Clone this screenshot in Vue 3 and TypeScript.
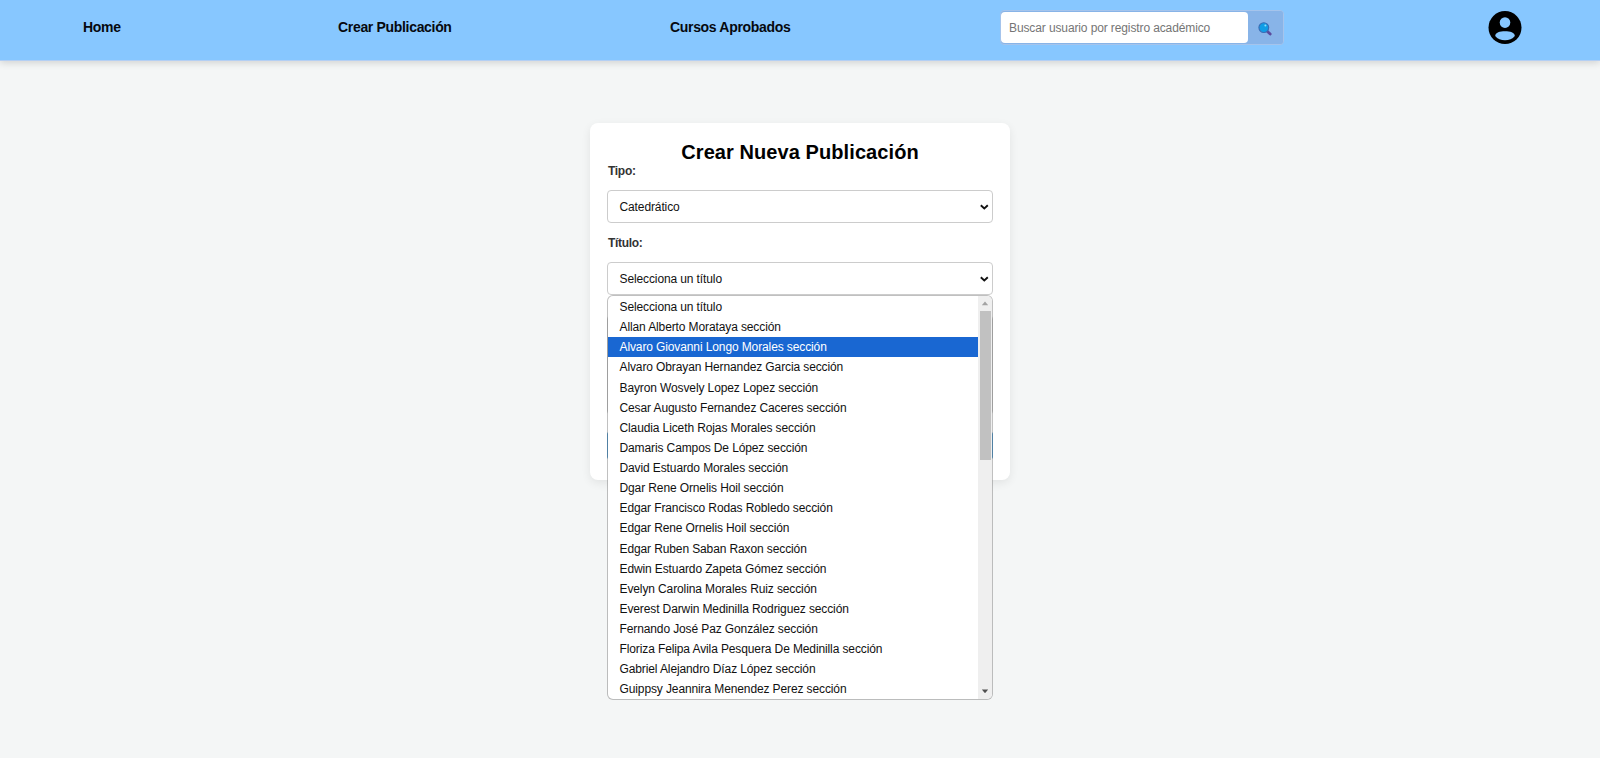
<script setup lang="ts">
import { ref } from 'vue'

const teachers: string[] = [
  'Allan Alberto Morataya',
  'Alvaro Giovanni Longo Morales',
  'Alvaro Obrayan Hernandez Garcia',
  'Bayron Wosvely Lopez Lopez',
  'Cesar Augusto Fernandez Caceres',
  'Claudia Liceth Rojas Morales',
  'Damaris Campos De López',
  'David Estuardo Morales',
  'Dgar Rene Ornelis Hoil',
  'Edgar Francisco Rodas Robledo',
  'Edgar Rene Ornelis Hoil',
  'Edgar Ruben Saban Raxon',
  'Edwin Estuardo Zapeta Gómez',
  'Evelyn Carolina Morales Ruiz',
  'Everest Darwin Medinilla Rodriguez',
  'Fernando José Paz González',
  'Floriza Felipa Avila Pesquera De Medinilla',
  'Gabriel Alejandro Díaz López',
  'Guippsy Jeannira Menendez Perez',
]
const options: string[] = ['Selecciona un título', ...teachers.map((t) => `${t} sección`)]
const active = ref(2)
const query = ref('')
</script>

<template>
  <div class="page">
    <header class="navbar">
      <a class="link home">Home</a>
      <a class="link create">Crear Publicación</a>
      <a class="link courses">Cursos Aprobados</a>
      <div class="search">
        <input v-model="query" class="search-input" type="text" placeholder="Buscar usuario por registro académico" />
        <button class="search-btn" type="button" aria-label="Buscar">
          <svg width="14" height="14" viewBox="0 0 14 14">
            <path d="M9.2 9.2 12.2 12" stroke="#5b4a9c" stroke-width="2.8" stroke-linecap="round" />
            <circle cx="5.8" cy="5.6" r="4.9" fill="#109de6" stroke="#3b6cb4" stroke-width="1.1" />
            <circle cx="7.4" cy="3.4" r="1" fill="#8be0fb" />
          </svg>
        </button>
      </div>
      <svg class="avatar" width="34" height="34" viewBox="0 0 34 34">
        <circle cx="17" cy="16.6" r="16.5" fill="#000" />
        <circle cx="17" cy="11.6" r="5.3" fill="#87c7ff" />
        <path d="M7.2 25C7.2 21.5 12 20.3 17 20.3S26.800 21.500 26.800 25C24.500 27.900 21 29.200 17 29.200S9.500 27.900 7.200 25Z" fill="#87c7ff" />
      </svg>
    </header>

    <main class="content">
      <form class="card" @submit.prevent>
        <h2 class="title">Crear Nueva Publicación</h2>
        <label class="label">Tipo:</label>
        <div class="select">
          <span>Catedrático</span>
          <svg class="chevron" width="10" height="7" viewBox="0 0 10 7"><path d="M1.8 1.3 5.3 4.5 8.8 1.3" /></svg>
        </div>
        <label class="label second">Título:</label>
        <div class="select">
          <span>Selecciona un título</span>
          <svg class="chevron" width="10" height="7" viewBox="0 0 10 7"><path d="M1.8 1.3 5.3 4.5 8.8 1.3" /></svg>
          <div class="dropdown">
            <ul class="list">
              <li v-for="(o, i) in options" :key="o" class="option" :class="{ active: i === active }" @mouseenter="active = i">{{ o }}</li>
            </ul>
            <div class="scrollbar">
              <svg class="arrow" width="8" height="5" viewBox="0 0 8 5"><path d="M4 0.5 7.2 4.2H0.8Z" fill="#a3a3a3" /></svg>
              <div class="thumb"></div>
              <svg class="arrow" width="8" height="5" viewBox="0 0 8 5"><path d="M4 4.2 0.8 0.5H7.2Z" fill="#505050" /></svg>
            </div>
          </div>
        </div>
        <div class="message"></div>
        <div class="submit"></div>
      </form>
    </main>
  </div>
</template>

<style>
body {
  background: #f4f6f6;
}
</style>

<style scoped>
.page {
  height: 758px;
  overflow: hidden;
  background: #f4f6f6;
  font-family: 'Liberation Sans', Arial, sans-serif;
  font-size: 12px;
  letter-spacing: -0.115px;
  color: #111;
}
.navbar {
  box-sizing: border-box;
  display: flex;
  align-items: center;
  height: 61px;
  padding: 0 78px 5px 83px;
  background: #87c7ff;
  border-bottom: 1px solid #b4cff3;
  box-shadow: 0 2px 7px rgba(0, 0, 0, 0.14);
}
.link {
  padding-bottom: 1px;
  font-size: 14px;
  font-weight: bold;
  letter-spacing: -0.32px;
  color: #06090f;
  white-space: nowrap;
}
.home {
  width: 255px;
}
.create {
  width: 332px;
}
.courses {
  width: 330px;
}
.search {
  box-sizing: border-box;
  display: flex;
  width: 284px;
  height: 35px;
  border: 1px solid #a5c4ec;
  border-radius: 4px;
  background: #88b4e8;
  overflow: hidden;
}
.search-input {
  box-sizing: border-box;
  width: 247px;
  height: 31px;
  margin-top: 1px;
  padding: 0 9px 0 8px;
  border: 0;
  border-radius: 4px;
  outline: 0;
  background: #fff;
  font: 12px 'Liberation Sans', Arial, sans-serif;
  letter-spacing: -0.115px;
}
.search-input::placeholder {
  color: #757575;
}
.search-btn {
  flex: 1;
  display: flex;
  align-items: center;
  justify-content: center;
  padding: 2px 1px 0 0;
  border: 0;
  background: #88b4e8;
}
.avatar {
  margin-left: auto;
}
.content {
  display: flex;
  justify-content: center;
  padding-top: 62px;
}
.card {
  box-sizing: border-box;
  width: 420px;
  height: 356.5px;
  padding: 18px 17px 0;
  border-radius: 8px;
  background: #fff;
  box-shadow: 0 3px 10px rgba(0, 0, 0, 0.08);
}
.title {
  margin: 0;
  font-size: 20px;
  line-height: 23px;
  letter-spacing: 0.08px;
  text-align: center;
  color: #000;
}
.label {
  display: block;
  padding-left: 1px;
  font-weight: bold;
  line-height: 15px;
  letter-spacing: -0.3px;
  color: #333;
}
.second {
  margin-top: 13px;
}
.select {
  position: relative;
  box-sizing: border-box;
  display: flex;
  align-items: center;
  justify-content: space-between;
  height: 33px;
  margin-top: 11px;
  padding: 1px 3px 0 11.5px;
  border: 1px solid #ccc;
  border-radius: 4px;
}
.chevron path {
  fill: none;
  stroke: #111;
  stroke-width: 1.9;
}
.dropdown {
  position: absolute;
  z-index: 2;
  top: 32px;
  left: -1px;
  box-sizing: border-box;
  display: flex;
  width: 386px;
  height: 405px;
  border: 1px solid rgba(130, 130, 130, 0.5);
  border-radius: 6px;
  background: #fff;
  background-clip: padding-box;
  overflow: hidden;
}
.list {
  flex: 1;
  margin: 0;
  padding: 1px 0 0;
  list-style: none;
}
.option {
  height: 20.14px;
  padding-left: 11.5px;
  line-height: 20px;
  white-space: nowrap;
}
.option.active {
  background: #1967d2;
  color: #fff;
}
.scrollbar {
  display: flex;
  flex-direction: column;
  align-items: center;
  width: 14px;
  padding: 5px 0;
  box-sizing: border-box;
  background: #efefef;
}
.thumb {
  width: 11px;
  height: 149px;
  margin: 5px 0 auto;
  background: #c1c1c1;
}
.message {
  box-sizing: border-box;
  height: 100px;
  margin-top: 20px;
  border: 1px solid #bbb;
  border-radius: 4px;
}
.submit {
  height: 27px;
  margin-top: 17px;
  border-radius: 2px;
  background: #1f7fc4;
}
</style>
